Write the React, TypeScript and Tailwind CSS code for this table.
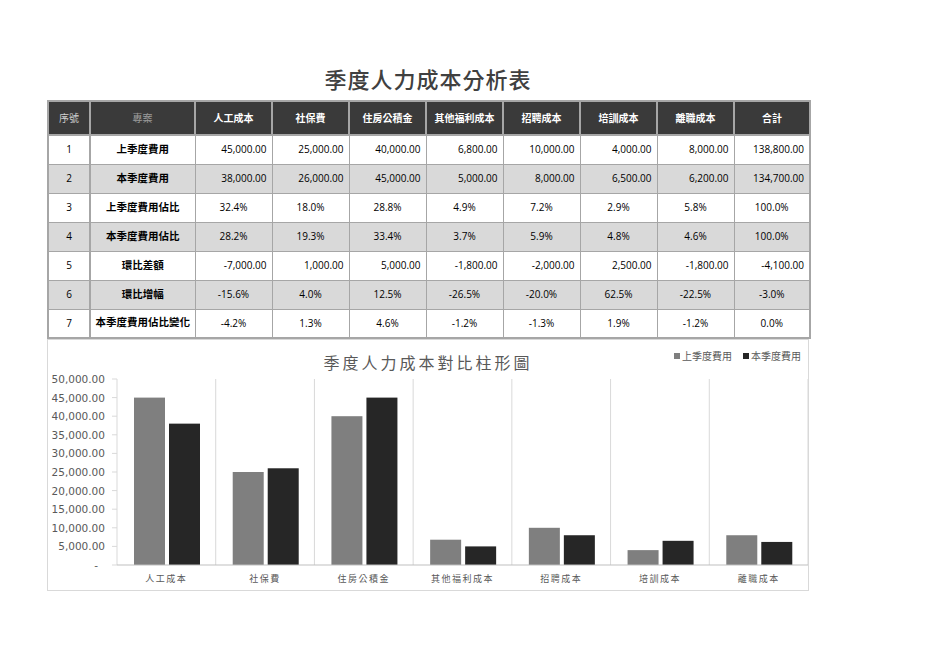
import React from "react";

const cols = ["人工成本", "社保費", "住房公積金", "其他福利成本", "招聘成本", "培訓成本", "離職成本", "合計"];

// kind: "num" right aligned, "pct" centered
const rows = [
  { name: "上季度費用", kind: "num", vals: ["45,000.00", "25,000.00", "40,000.00", "6,800.00", "10,000.00", "4,000.00", "8,000.00", "138,800.00"] },
  { name: "本季度費用", kind: "num", vals: ["38,000.00", "26,000.00", "45,000.00", "5,000.00", "8,000.00", "6,500.00", "6,200.00", "134,700.00"] },
  { name: "上季度費用佔比", kind: "pct", vals: ["32.4%", "18.0%", "28.8%", "4.9%", "7.2%", "2.9%", "5.8%", "100.0%"] },
  { name: "本季度費用佔比", kind: "pct", vals: ["28.2%", "19.3%", "33.4%", "3.7%", "5.9%", "4.8%", "4.6%", "100.0%"] },
  { name: "環比差額", kind: "num", vals: ["-7,000.00", "1,000.00", "5,000.00", "-1,800.00", "-2,000.00", "2,500.00", "-1,800.00", "-4,100.00"] },
  { name: "環比增幅", kind: "pct", vals: ["-15.6%", "4.0%", "12.5%", "-26.5%", "-20.0%", "62.5%", "-22.5%", "-3.0%"] },
  { name: "本季度費用佔比變化", kind: "pct", vals: ["-4.2%", "1.3%", "4.6%", "-1.2%", "-1.3%", "1.9%", "-1.2%", "0.0%"] },
];

const chartData: [string, number, number][] = [
  ["人工成本", 45000, 38000],
  ["社保費", 25000, 26000],
  ["住房公積金", 40000, 45000],
  ["其他福利成本", 6800, 5000],
  ["招聘成本", 10000, 8000],
  ["培訓成本", 4000, 6500],
  ["離職成本", 8000, 6200],
];

const yTicks = ["50,000.00", "45,000.00", "40,000.00", "35,000.00", "30,000.00", "25,000.00", "20,000.00", "15,000.00", "10,000.00", "5,000.00", "-"];

const PLOT_L = 69;
const PLOT_R = 760;
const PLOT_T = 5;
const PLOT_B = 191;
const CAT_W = (PLOT_R - PLOT_L) / 7;

const BarChart = () => {
  const h = (v: number) => (v / 50000) * (PLOT_B - PLOT_T);
  return (
    <svg width={760} height={216} className="block">
      {/* vertical category gridlines */}
      {Array.from({ length: 8 }).map((_, i) => (
        <line key={i} x1={PLOT_L + i * CAT_W} x2={PLOT_L + i * CAT_W} y1={PLOT_T} y2={PLOT_B} stroke="#d9d9d9" strokeWidth={1} />
      ))}
      {/* y ticks + labels */}
      {yTicks.map((t, i) => {
        const y = PLOT_T + i * ((PLOT_B - PLOT_T) / 10);
        return (
          <g key={t}>
            <line x1={PLOT_L - 5} x2={PLOT_L} y1={y} y2={y} stroke="#d9d9d9" />
            <text
              x={t === "-" ? 50 : 57}
              y={y + 4}
              textAnchor="end"
              fontSize={10.5}
              fill="#595959"
              fontFamily="'DejaVu Sans', sans-serif"
            >
              {t}
            </text>
          </g>
        );
      })}
      {/* bars */}
      {chartData.map(([label, a, b], i) => {
        const x0 = PLOT_L + i * CAT_W;
        return (
          <g key={label}>
            <rect x={x0 + 17} y={PLOT_B - h(a)} width={31} height={h(a)} fill="#7f7f7f" />
            <rect x={x0 + 52} y={PLOT_B - h(b)} width={31} height={h(b)} fill="#262626" />
            <text
              x={x0 + CAT_W / 2}
              y={PLOT_B + 17}
              textAnchor="middle"
              fontSize={9}
              letterSpacing={1.5}
              fill="#595959"
              fontFamily="'Noto Sans CJK TC', sans-serif"
            >
              {label}
            </text>
          </g>
        );
      })}
      {/* x axis */}
      <line x1={PLOT_L} x2={PLOT_R} y1={PLOT_B} y2={PLOT_B} stroke="#bfbfbf" strokeWidth={1} />
    </svg>
  );
};

const App = () => {
  return (
    <div className="min-h-[662px] w-[936px] bg-white font-['Open_Sans','Noto_Sans_CJK_TC',sans-serif] text-black">
      <div className="ml-[47px] w-[762px] pt-[66px]">
        <h1 className="mb-[8px] h-[26px] text-center text-[22px] font-medium leading-[26px] tracking-[1px] text-[#404040]">
          季度人力成本分析表
        </h1>

        <table className="w-[762px] table-fixed border-collapse border-2 border-[#a6a6a6]">
          <colgroup>
            <col className="w-[42px]" />
            <col className="w-[105px]" />
            {cols.map((c) => (
              <col key={c} className={c === "合計" ? "w-[76px]" : "w-[77px]"} />
            ))}
          </colgroup>
          <thead>
            <tr className="h-[34px] bg-[#3a3a3a]">
              <th className="border-2 border-[#a6a6a6] text-center text-[10px] font-normal text-[#d0d0d0]">序號</th>
              <th className="border-2 border-[#a6a6a6] text-center text-[10px] font-normal text-[#9a9a9a]">專案</th>
              {cols.map((c) => (
                <th key={c} className="border-2 border-[#a6a6a6] text-center text-[10px] font-bold text-white">
                  {c}
                </th>
              ))}
            </tr>
          </thead>
          <tbody>
            {rows.map((r, i) => (
              <tr key={r.name} className={i % 2 === 1 ? "h-[29px] bg-[#d9d9d9]" : "h-[29px] bg-white"}>
                <td className="border border-r-2 border-[#a6a6a6] text-center text-[10px]">{i + 1}</td>
                <td className="border border-[#a6a6a6] text-center text-[10.5px] font-bold">{r.name}</td>
                {r.vals.map((v, j) => (
                  <td
                    key={j}
                    className={
                      r.kind === "num"
                        ? "border border-[#a6a6a6] pr-[5px] text-right text-[10px]"
                        : "border border-[#a6a6a6] text-center text-[10px]"
                    }
                  >
                    {v}
                  </td>
                ))}
              </tr>
            ))}
          </tbody>
        </table>

        {/* chart */}
        <div className="h-[252px] w-[762px] border border-[#d9d9d9] bg-white">
          <div className="relative h-[34px]">
            <div className="pt-[13px] text-center text-[16px] leading-[20px] tracking-[3px] text-[#595959]">
              季度人力成本對比柱形圖
            </div>
            <div className="absolute right-[7px] top-[11px] flex items-center gap-[11px] text-[10px] leading-[10px] text-[#595959]">
              <span className="flex items-center gap-[2px]">
                <span className="inline-block h-[6px] w-[6px] bg-[#7f7f7f]" />
                上季度費用
              </span>
              <span className="flex items-center gap-[2px]">
                <span className="inline-block h-[6px] w-[6px] bg-[#262626]" />
                本季度費用
              </span>
            </div>
          </div>
          <BarChart />
        </div>
      </div>
    </div>
  );
};

export default App;
